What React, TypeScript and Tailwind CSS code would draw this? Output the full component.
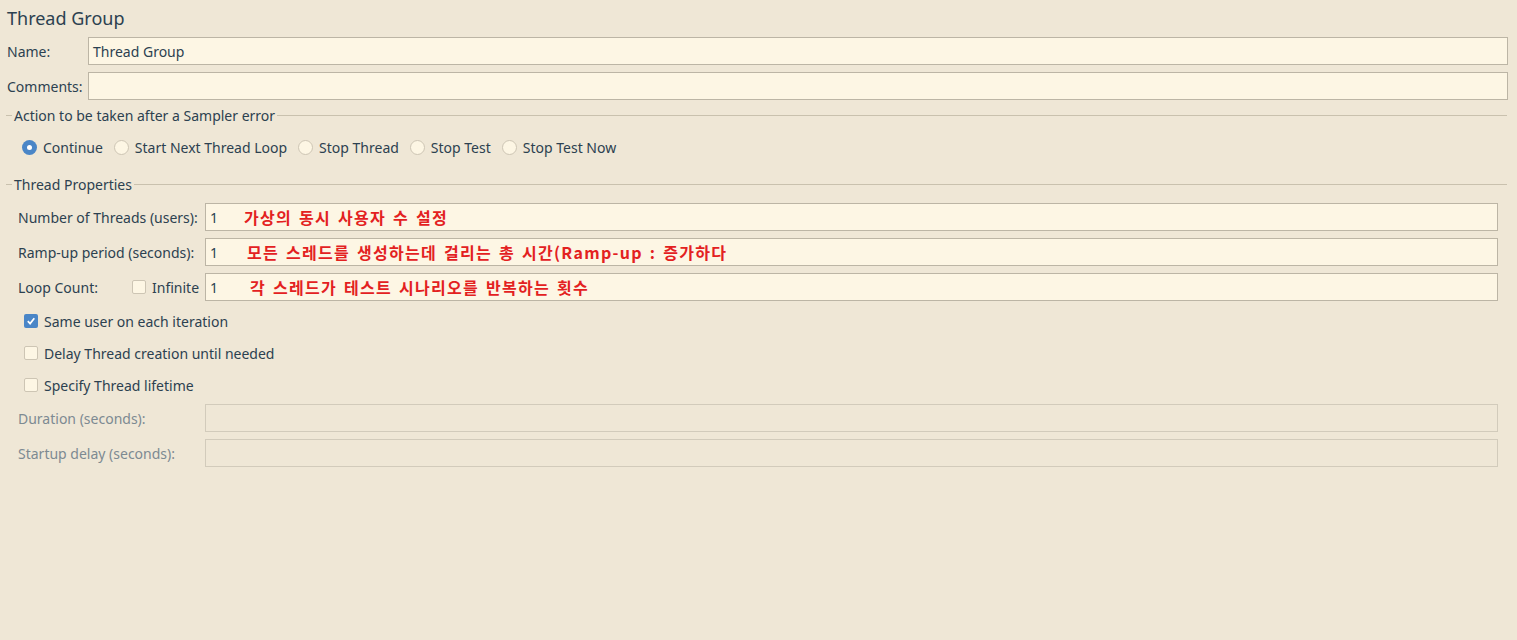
import React from 'react'

const font = { fontFamily: '"Noto Sans", "Open Sans", sans-serif' }
const kr = { fontFamily: '"Noto Sans CJK KR", "Noto Sans", sans-serif' }

function Separator({ title }: { title: string }) {
  return (
    <div className="flex h-[18px] items-center pl-[6px] pr-[10px]">
      <div className="h-px w-[6px] bg-[#c9c1ae]" />
      <span className="px-[2px] text-[14px] text-[#2c4150]">{title}</span>
      <div className="h-px flex-1 bg-[#c9c1ae]" />
    </div>
  )
}

function Radio({ label, checked }: { label: string; checked?: boolean }) {
  return (
    <div className="flex items-center gap-[6px]">
      {checked ? (
        <span className="flex h-[15px] w-[15px] items-center justify-center rounded-full bg-[#4a86c7]">
          <span className="h-[5px] w-[5px] rounded-full bg-white" />
        </span>
      ) : (
        <span className="h-[15px] w-[15px] rounded-full border border-[#cdc5b4] bg-[#fdf6e4]" />
      )}
      <span className="text-[14px] text-[#2c4150]">{label}</span>
    </div>
  )
}

function Check({ checked }: { checked?: boolean }) {
  return checked ? (
    <span className="flex h-[14px] w-[14px] items-center justify-center rounded-[2px] bg-[#4a86c7]">
      <svg width="10" height="10" viewBox="0 0 10 10">
        <path d="M1.8 5.2 L4.1 7.6 L8.3 2.3" fill="none" stroke="white" strokeWidth="1.7" />
      </svg>
    </span>
  ) : (
    <span className="h-[14px] w-[14px] rounded-[2px] border border-[#cdc5b4] bg-[#fdf6e4]" />
  )
}

function Field({ value, note, noteGap, disabled }: { value?: string; note?: string; noteGap?: string; disabled?: boolean }) {
  return (
    <div
      className={
        disabled
          ? 'flex h-[28px] flex-1 items-center border border-[#d2cbbb] bg-[#efe7d6] px-[5px]'
          : 'flex h-[28px] flex-1 items-center border border-[#bcb5a5] bg-[#fdf6e4] px-[4px] text-[14px] text-[#2c4150]'
      }
    >
      {value}
      {note && (
        <span style={kr} className={`${noteGap} text-[16px] font-bold tracking-[1.3px] [word-spacing:2px] text-[#e3211f]`}>
          {note}
        </span>
      )}
    </div>
  )
}

function PropRow({ label, children, disabled }: { label: React.ReactNode; children: React.ReactNode; disabled?: boolean }) {
  return (
    <div className="flex h-[28px] items-center pl-[18px] pr-[19px]">
      <div className={`w-[187px] text-[14px] ${disabled ? 'text-[#7d8a92]' : 'text-[#2c4150]'}`}>{label}</div>
      {children}
    </div>
  )
}

export default function App() {
  return (
    <div style={font} className="h-[640px] w-full bg-[#efe7d6]">
      <div className="flex h-[37px] items-center pl-[7px] text-[18px] text-[#2c4150]">Thread Group</div>
      <div className="flex h-[28px] items-center pl-[7px] pr-[9px]">
        <div className="w-[81px] text-[14px] text-[#2c4150]">Name:</div>
        <Field value="Thread Group" />
      </div>
      <div className="mt-[7px] flex h-[28px] items-center pl-[7px] pr-[9px]">
        <div className="w-[81px] text-[14px] text-[#2c4150]">Comments:</div>
        <Field />
      </div>
      <div className="mt-[6px]">
        <Separator title="Action to be taken after a Sampler error" />
      </div>
      <div className="mt-[14px] flex h-[18px] items-center gap-[11px] pl-[22px]">
        <Radio label="Continue" checked />
        <Radio label="Start Next Thread Loop" />
        <Radio label="Stop Thread" />
        <Radio label="Stop Test" />
        <Radio label="Stop Test Now" />
      </div>
      <div className="mt-[19px]">
        <Separator title="Thread Properties" />
      </div>
      <div className="mt-[10px] flex flex-col gap-[7px]">
        <PropRow label="Number of Threads (users):">
          <Field value="1" note="가상의 동시 사용자 수 설정" noteGap="ml-[26px]" />
        </PropRow>
        <PropRow label="Ramp-up period (seconds):">
          <Field value="1" note="모든 스레드를 생성하는데 걸리는 총 시간(Ramp-up : 증가하다" noteGap="ml-[29px]" />
        </PropRow>
        <PropRow
          label={
            <div className="flex items-center">
              <span className="w-[114px]">Loop Count:</span>
              <Check />
              <span className="ml-[6px]">Infinite</span>
            </div>
          }
        >
          <Field value="1" note="각 스레드가 테스트 시나리오를 반복하는 횟수" noteGap="ml-[32px]" />
        </PropRow>
      </div>
      <div className="mt-[11px] flex flex-col gap-[14px] pl-[24px]">
        {[
          ['Same user on each iteration', true],
          ['Delay Thread creation until needed', false],
          ['Specify Thread lifetime', false],
        ].map(([l, c]) => (
          <div key={l as string} className="flex h-[18px] items-center gap-[6px]">
            <Check checked={c as boolean} />
            <span className="text-[14px] text-[#2c4150]">{l as string}</span>
          </div>
        ))}
      </div>
      <div className="mt-[10px] flex flex-col gap-[7px]">
        <PropRow label="Duration (seconds):" disabled>
          <Field disabled />
        </PropRow>
        <PropRow label="Startup delay (seconds):" disabled>
          <Field disabled />
        </PropRow>
      </div>
    </div>
  )
}
